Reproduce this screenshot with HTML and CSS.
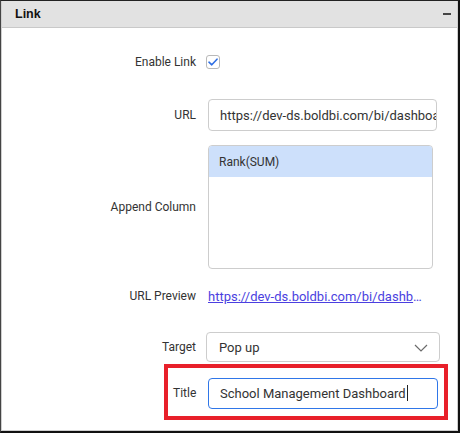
FILE: index.html
```html
<!DOCTYPE html>
<html>
<head>
<meta charset="utf-8">
<link rel="stylesheet" href="styles.css">
</head>
<body>
<div class="frame">
  <div class="panel">
    <div class="header">
      <span class="title">Link</span>
      <span class="collapse"></span>
    </div>
    <div class="body">
      <div class="row row-enable">
        <label class="lbl">Enable Link</label>
        <div class="field">
          <span class="checkbox">
            <svg width="10" height="8" viewBox="0 0 10 8"><path d="M1 4.2 L3.8 6.8 L9 1.2" fill="none" stroke="#2f6fe4" stroke-width="1.6" stroke-linecap="round" stroke-linejoin="round"/></svg>
          </span>
        </div>
      </div>
      <div class="row row-url">
        <label class="lbl">URL</label>
        <div class="field">
          <div class="input url-input">https://dev-ds.boldbi.com/bi/dashboards/</div>
        </div>
      </div>
      <div class="row row-append">
        <label class="lbl">Append Column</label>
        <div class="field">
          <div class="list">
            <div class="list-item selected">Rank(SUM)</div>
          </div>
        </div>
      </div>
      <div class="row row-preview">
        <label class="lbl">URL Preview</label>
        <div class="field">
          <a class="preview" href="#">https://dev-ds.boldbi.com/bi/dashboards/school-management</a>
        </div>
      </div>
      <div class="row row-target">
        <label class="lbl">Target</label>
        <div class="field">
          <div class="select">
            <span>Pop up</span>
            <svg class="chev" width="14" height="8" viewBox="0 0 14 8"><path d="M1 1 L7 7 L13 1" fill="none" stroke="#6b6b6b" stroke-width="1.2"/></svg>
          </div>
        </div>
      </div>
      <div class="highlight">
        <label class="lbl title-lbl">Title</label>
        <div class="input title-input">School Management Dashboard<span class="caret"></span></div>
      </div>
    </div>
  </div>
</div>
</body>
</html>
```
FILE: styles.css
```css
* { box-sizing: border-box; }
html, body { margin: 0; padding: 0; background: #fff; }
body { font-family: Roboto, "Liberation Sans", sans-serif; }

.frame {
  width: 460px;
  height: 433px;
  border-top: 1px solid #222;
  border-left: 1px solid #444;
  border-right: 2px solid #111;
  border-bottom: 2px solid #111;
}
.panel {
  height: 100%;
  border-left: 1px solid #cfcfcf;
  border-right: 1px solid #cfcfcf;
  border-bottom: 1px solid #cfcfcf;
}
.header {
  height: 27px;
  background: #e2e2e2;
  border-bottom: 1px solid #c9c9c9;
  display: flex;
  align-items: center;
  justify-content: space-between;
  padding: 0 6px 0 13px;
}
.title {
  font-family: "Liberation Sans", Arial, sans-serif;
  font-weight: bold;
  font-size: 12.5px;
  color: #111;
  margin-top: -1px;
}
.collapse {
  width: 8px;
  height: 2px;
  background: #444;
  margin-top: -1px;
}

.body { display: flex; flex-direction: column; }
.row {
  display: grid;
  grid-template-columns: 194px 1fr;
  column-gap: 12px;
  align-items: center;
}
.lbl {
  text-align: right;
  font-size: 12px;
  color: #333;
}
.row-enable { margin-top: 27px; height: 14px; }
.row-url { margin-top: 30px; height: 32px; }
.row-append { margin-top: 14px; height: 124px; }
.row-preview { margin-top: 19px; height: 16px; }
.row-target { margin-top: 28px; height: 30px; }

.checkbox {
  display: flex;
  align-items: center;
  justify-content: center;
  width: 14px;
  height: 14px;
  margin-left: -2px;
  border: 1px solid #b9b9b9;
  border-radius: 3px;
  background: #fff;
}

.input {
  height: 32px;
  border: 1px solid #cdcdcd;
  border-radius: 4px;
  padding: 0 11px;
  font-size: 13px;
  color: #333;
  display: flex;
  align-items: center;
  white-space: nowrap;
  overflow: hidden;
}
.url-input { width: 229px; }

.list {
  width: 225px;
  height: 124px;
  border: 1px solid #cdcdcd;
  border-radius: 4px;
  overflow: hidden;
}
.list-item {
  height: 31px;
  padding: 0 10px;
  display: flex;
  align-items: center;
  font-size: 12px;
  color: #333;
}
.list-item.selected { background: #cde0fb; }

.preview {
  display: block;
  width: 216px;
  font-size: 13px;
  color: #4b3fe0;
  text-decoration: underline;
  white-space: nowrap;
  overflow: hidden;
  text-overflow: ellipsis;
}

.select {
  width: 234px;
  height: 30px;
  margin-left: -2px;
  border: 1px solid #cdcdcd;
  border-radius: 4px;
  padding: 0 11px 0 12px;
  display: flex;
  align-items: center;
  justify-content: space-between;
  font-size: 13px;
  color: #333;
}
.chev { margin-top: 1px; }

.highlight {
  margin-top: 2px;
  margin-left: 162px;
  width: 284px;
  height: 56px;
  border: 4px solid #e8202a;
  display: flex;
  align-items: center;
  padding: 2px 6px 0 5px;
}
.title-lbl { width: 23px; text-align: left; }
.title-input {
  margin-left: 12px;
  width: 230px;
  height: 31px;
  border: 1px solid #2f76e8;
  padding-left: 11px;
}
.caret {
  display: inline-block;
  width: 1px;
  height: 16px;
  background: #222;
  margin-left: 1px;
}
```
